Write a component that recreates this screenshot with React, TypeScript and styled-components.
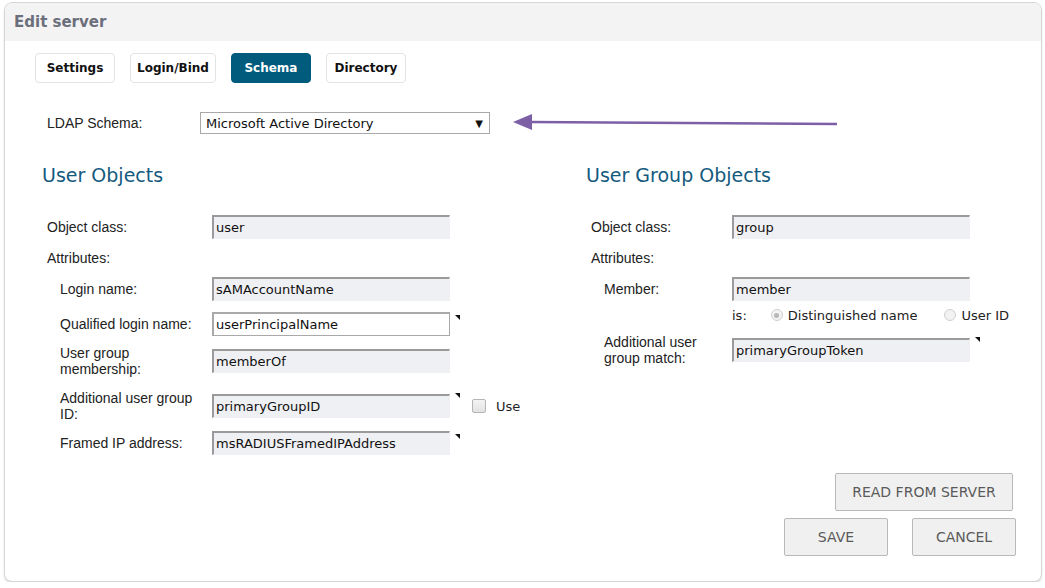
import styled, { createGlobalStyle } from "styled-components";

const GlobalStyle = createGlobalStyle`
  html, body {
    margin: 0;
    padding: 0;
    background: #ffffff;
  }
  body {
    font-family: "Liberation Sans", Arial, sans-serif;
    color: #222;
  }
`;

const tahoma = `"DejaVu Sans", "Noto Sans", sans-serif`;

export default function App() {
  return (
    <>
      <GlobalStyle />
      <Card>
        <CardHeader>Edit server</CardHeader>
        <CardBody>
          <Tabs>
            <Tab>Settings</Tab>
            <Tab>Login/Bind</Tab>
            <Tab $active>Schema</Tab>
            <Tab>Directory</Tab>
          </Tabs>

          <SchemaRow>
            <SchemaLabel>LDAP Schema:</SchemaLabel>
            <Select>
              <span>Microsoft Active Directory</span>
              <SelectCaret>▼</SelectCaret>
            </Select>
            <Arrow width="330" height="20" viewBox="0 0 330 20">
              <polygon points="0,9 19,1 19,17" fill="#7d5fa6" />
              <line x1="16" y1="9" x2="324" y2="11" stroke="#7d5fa6" strokeWidth="2.4" />
            </Arrow>
          </SchemaRow>

          <Columns>
            <Column>
              <SectionTitle>User Objects</SectionTitle>
              <Field $label={165} $indent={5}>
                <Label>Object class:</Label>
                <Input>user</Input>
              </Field>
              <Plain $indent={5}>Attributes:</Plain>
              <Field $label={152} $indent={18}>
                <Label>Login name:</Label>
                <Input>sAMAccountName</Input>
              </Field>
              <Field $label={152} $indent={18}>
                <Label>Qualified login name:</Label>
                <Input $editable>userPrincipalName</Input>
                <Marker />
              </Field>
              <Field $label={152} $indent={18} $shift={-2}>
                <Label>User group membership:</Label>
                <Input>memberOf</Input>
              </Field>
              <Field $label={152} $indent={18} $shift={2}>
                <Label>Additional user group ID:</Label>
                <Input>primaryGroupID</Input>
                <Marker />
                <CheckWrap>
                  <Checkbox />
                  <span>Use</span>
                </CheckWrap>
              </Field>
              <Field $label={152} $indent={18} $shift={-2}>
                <Label>Framed IP address:</Label>
                <Input>msRADIUSFramedIPAddress</Input>
                <Marker />
              </Field>
            </Column>

            <Column>
              <SectionTitle>User Group Objects</SectionTitle>
              <Field $label={141} $indent={5}>
                <Label>Object class:</Label>
                <Input>group</Input>
              </Field>
              <Plain $indent={5}>Attributes:</Plain>
              <Field $label={128} $indent={18}>
                <Label>Member:</Label>
                <Input>member</Input>
              </Field>
              <RadioRow>
                <span>is:</span>
                <Radio $checked $space={24} />
                <RadioText>Distinguished name</RadioText>
                <Radio $space={27} />
                <RadioText>User ID</RadioText>
              </RadioRow>
              <Field $label={128} $indent={18}>
                <Label>Additional user group match:</Label>
                <Input>primaryGroupToken</Input>
                <Marker />
              </Field>
            </Column>
          </Columns>

          <Actions>
            <Button $wide>READ FROM SERVER</Button>
            <ButtonRow>
              <Button>SAVE</Button>
              <Button>CANCEL</Button>
            </ButtonRow>
          </Actions>
        </CardBody>
      </Card>
    </>
  );
}

const Card = styled.div`
  margin: 2px 3px 0 4px;
  height: 580px;
  box-sizing: border-box;
  border: 1px solid #d6d6d6;
  border-radius: 8px;
  box-shadow: 0 2px 2px rgba(0, 0, 0, 0.12);
  overflow: hidden;
  background: #fff;
`;

const CardHeader = styled.div`
  height: 38px;
  background: #f3f3f3;
  padding-left: 9px;
  display: flex;
  align-items: center;
  font-family: ${tahoma};
  font-weight: bold;
  font-size: 15px;
  color: #6b6e7b;
`;

const CardBody = styled.div`
  padding: 12px 0 0 30px;
`;

const Tabs = styled.div`
  display: flex;
  gap: 15px;
`;

const Tab = styled.div<{ $active?: boolean }>`
  height: 30px;
  min-width: 80px;
  padding: 0 6px;
  box-sizing: border-box;
  display: flex;
  align-items: center;
  justify-content: center;
  border: 1px solid ${(p) => (p.$active ? "#005b7d" : "#e3e3e3")};
  border-radius: 4px;
  background: ${(p) => (p.$active ? "#005b7d" : "#fff")};
  color: ${(p) => (p.$active ? "#fff" : "#111")};
  font-family: ${tahoma};
  font-weight: bold;
  font-size: 12px;
`;

const SchemaRow = styled.div`
  display: flex;
  align-items: center;
  margin-top: 29px;
  padding-left: 12px;
`;

const SchemaLabel = styled.div`
  width: 153px;
  font-size: 14px;
`;

const Select = styled.div`
  width: 290px;
  height: 22px;
  box-sizing: border-box;
  border: 1px solid #a9a9a9;
  display: flex;
  align-items: center;
  justify-content: space-between;
  padding: 0 6px 0 5px;
  font-family: ${tahoma};
  font-size: 13px;
  color: #111;
`;

const SelectCaret = styled.span`
  font-size: 10px;
  color: #111;
`;

const Arrow = styled.svg`
  margin-left: 23px;
`;

const Columns = styled.div`
  display: grid;
  grid-template-columns: 544px 1fr;
  margin-top: 29px;
  padding-left: 7px;
`;

const Column = styled.div`
  display: flex;
  flex-direction: column;
  gap: 11px;
`;

const SectionTitle = styled.h2`
  margin: 0 0 17px;
  font-family: ${tahoma};
  font-weight: normal;
  font-size: 19px;
  color: #145a7e;
  height: 24px;
  line-height: 24px;
`;

const Field = styled.div<{ $label: number; $indent: number; $shift?: number }>`
  display: grid;
  grid-template-columns: ${(p) => p.$label}px auto auto 1fr;
  align-items: center;
  padding-left: ${(p) => p.$indent}px;
  margin-top: ${(p) => p.$shift ?? 0}px;
`;

const Label = styled.div`
  font-size: 14px;
  line-height: 16px;
  padding-right: 10px;
`;

const Plain = styled.div<{ $indent: number }>`
  font-size: 14px;
  line-height: 16px;
  padding-left: ${(p) => p.$indent}px;
`;

const Input = styled.div<{ $editable?: boolean }>`
  width: 238px;
  height: 24px;
  box-sizing: border-box;
  display: flex;
  align-items: center;
  padding-left: 2px;
  font-family: ${tahoma};
  font-size: 13px;
  color: #111;
  background: ${(p) => (p.$editable ? "#fff" : "#eff0f3")};
  border: 1px solid ${(p) => (p.$editable ? "#a9a9a9" : "transparent")};
  border-top: 2px solid ${(p) => (p.$editable ? "#a9a9a9" : "#9a9a9a")};
  border-left: 2px solid ${(p) => (p.$editable ? "#a9a9a9" : "#9a9a9a")};
`;

const Marker = styled.span`
  align-self: start;
  width: 0;
  height: 0;
  margin: 3px 0 0 5px;
  border-top: 5px solid #111;
  border-left: 5px solid transparent;
`;

const CheckWrap = styled.label`
  display: flex;
  align-items: center;
  gap: 10px;
  margin-left: 12px;
  font-family: ${tahoma};
  font-size: 13px;
  color: #222;
`;

const Checkbox = styled.span`
  width: 12px;
  height: 12px;
  border: 1px solid #b5b5b5;
  border-radius: 2px;
  background: linear-gradient(#f4f4f4, #e2e2e2);
`;

const RadioRow = styled.div`
  display: flex;
  align-items: center;
  height: 16px;
  margin: -5px 0 0 146px;
  font-family: ${tahoma};
  font-size: 13px;
  color: #222;
  white-space: nowrap;
`;

const RadioText = styled.span`
  margin-left: 5px;
`;

const Radio = styled.span<{ $checked?: boolean; $space: number }>`
  width: 12px;
  height: 12px;
  box-sizing: border-box;
  border: 1px solid #d0d0d0;
  border-radius: 50%;
  background: #f2f2f2;
  margin-left: ${(p) => p.$space}px;
  display: flex;
  align-items: center;
  justify-content: center;

  &::after {
    content: "";
    width: 5px;
    height: 5px;
    border-radius: 50%;
    background: ${(p) => (p.$checked ? "#b8b8b8" : "transparent")};
  }
`;

const Actions = styled.div`
  display: flex;
  flex-direction: column;
  align-items: flex-end;
  gap: 7px;
  padding-right: 28px;
  margin-top: 18px;
`;

const ButtonRow = styled.div`
  display: flex;
  gap: 24px;
  margin-right: -3px;
`;

const Button = styled.button<{ $wide?: boolean }>`
  width: ${(p) => (p.$wide ? "178px" : "104px")};
  height: 38px;
  border: 1px solid #b9b9b9;
  border-radius: 2px;
  background: #f0f0f0;
  color: #5a5a5a;
  font-family: ${tahoma};
  font-size: 14px;
`;
